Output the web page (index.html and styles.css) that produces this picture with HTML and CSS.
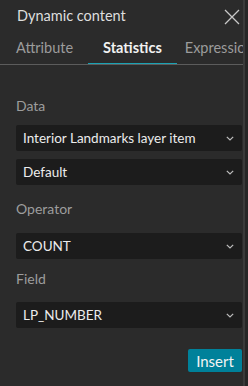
FILE: index.html
```html
<!DOCTYPE html>
<html>
<head>
<meta charset="utf-8">
<link rel="stylesheet" href="styles.css">
</head>
<body>
<div class="panel">
  <div class="header">
    <span class="title">Dynamic content</span>
    <svg class="close" width="16" height="16" viewBox="0 0 16 16"><path d="M1 1L15 15M15 1L1 15" stroke="#c8c8c8" stroke-width="1.3" fill="none"/></svg>
  </div>
  <div class="tabs">
    <div class="tab first">Attribute</div>
    <div class="tab active">Statistics</div>
    <div class="tab last">Expression</div>
  </div>
  <div class="content">
    <div class="label l-data">Data</div>
    <div class="select s1"><span>Interior Landmarks layer item</span><svg class="chev" width="8" height="5" viewBox="0 0 8 5"><path d="M0.8 0.8L4 4L7.2 0.8" stroke="#bdbdbd" stroke-width="1.2" fill="none"/></svg></div>
    <div class="select s2"><span>Default</span><svg class="chev" width="8" height="5" viewBox="0 0 8 5"><path d="M0.8 0.8L4 4L7.2 0.8" stroke="#bdbdbd" stroke-width="1.2" fill="none"/></svg></div>
    <div class="label l-op">Operator</div>
    <div class="select s3"><span>COUNT</span><svg class="chev" width="8" height="5" viewBox="0 0 8 5"><path d="M0.8 0.8L4 4L7.2 0.8" stroke="#bdbdbd" stroke-width="1.2" fill="none"/></svg></div>
    <div class="label l-field">Field</div>
    <div class="select s4"><span>LP_NUMBER</span><svg class="chev" width="8" height="5" viewBox="0 0 8 5"><path d="M0.8 0.8L4 4L7.2 0.8" stroke="#bdbdbd" stroke-width="1.2" fill="none"/></svg></div>
    <div class="actions"><button class="insert">Insert</button></div>
  </div>
</div>
</body>
</html>
```
FILE: styles.css
```css
html, body {
  margin: 0;
  padding: 0;
}
body {
  width: 248px;
  height: 386px;
  background: #262626;
  font-family: Lato, "Noto Sans", sans-serif;
  overflow: hidden;
}
.panel {
  width: 243px;
  height: 386px;
  background: #2b2b2b;
  border-right: 2px solid #3a3a3a;
  box-sizing: content-box;
}
.header {
  height: 32px;
  display: flex;
  align-items: center;
  justify-content: space-between;
  padding: 0 3px 0 17px;
}
.title {
  color: #dedede;
  font-size: 14.5px;
  margin-top: -1px;
}
.close {
  display: block;
  margin-top: 1px;
}
.tabs {
  display: flex;
  height: 32px;
  border-bottom: 1px solid #5c5c5c;
  white-space: nowrap;
  overflow: hidden;
}
.tab {
  color: #9c9c9c;
  font-size: 14.5px;
  line-height: 32px;
  padding: 0 15px;
  border-bottom: 2px solid transparent;
  margin-bottom: -1px;
}
.tab.first {
  padding-left: 16px;
}
.tab.active {
  color: #f2f2f2;
  font-weight: 700;
  border-bottom-color: #1ba2b4;
}
.tab.last {
  padding-left: 8px;
}
.content {
  padding: 0 1px 0 16px;
}
.label {
  color: #9d9d9d;
  font-size: 14px;
  line-height: 16px;
  height: 16px;
}
.l-data { margin-top: 33px; }
.l-op { margin-top: 16px; }
.l-field { margin-top: 12px; }
.select {
  height: 26px;
  background: #1c1c1c;
  border-radius: 2px;
  display: flex;
  align-items: center;
  justify-content: space-between;
  padding: 0 8px 0 7px;
  color: #ececec;
  font-size: 13.5px;
}
.s1 { margin-top: 11px; }
.s2 { margin-top: 8px; }
.s3 { margin-top: 16px; }
.s4 { margin-top: 15px; }
.chev {
  display: block;
  margin-top: 1px;
}
.actions {
  display: flex;
  justify-content: flex-end;
  margin-top: 21px;
}
.insert {
  width: 54px;
  height: 23px;
  background: #00819a;
  border: none;
  border-radius: 2px;
  color: #f4f4f4;
  font-family: Lato, "Noto Sans", sans-serif;
  font-size: 15px;
  padding: 0;
}
```
